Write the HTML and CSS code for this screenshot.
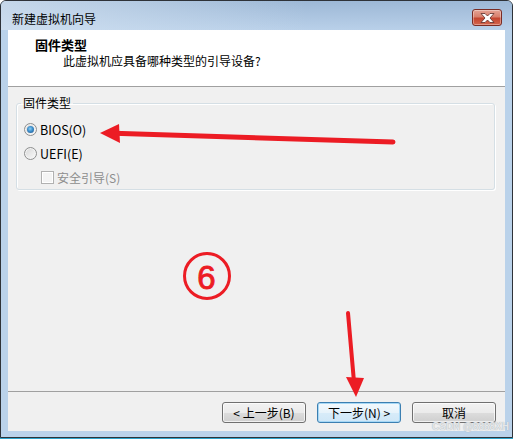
FILE: index.html
```html
<!DOCTYPE html>
<html lang="zh-CN">
<head>
    <meta charset="UTF-8">
    <meta name="viewport" content="width=device-width, initial-scale=1.0">
    <title>新建虚拟机向导</title>
    <link rel="stylesheet" href="styles.css">
</head>
<body>
    <div class="window">
        <div class="title-bar">
            <span class="title">新建虚拟机向导</span>
            <div class="close-btn">
                <svg width="15" height="10" viewBox="0 0 15 10">
                    <path d="M1 0.5h4L7.5 3l2.5-2.5h4L10 5l4 4.5h-4L7.5 7 5 9.5H1L5 5z" fill="#fff" stroke="#5a2d28" stroke-width="0.8" stroke-linejoin="round"/>
                </svg>
            </div>
        </div>

        <div class="client">
            <div class="header">
                <div class="header-title">固件类型</div>
                <div class="header-sub">此虚拟机应具备哪种类型的引导设备?</div>
            </div>

            <div class="content">
                <fieldset class="group">
                    <legend>固件类型</legend>
                    <div class="option"><span class="radio checked"></span>BIOS(O)</div>
                    <div class="option"><span class="radio"></span>UEFI(E)</div>
                    <div class="option sub disabled"><span class="checkbox"></span>安全引导(S)</div>
                </fieldset>
            </div>

            <div class="footer">
                <div class="btn">&lt; 上一步(B)</div>
                <div class="btn default">下一步(N) &gt;</div>
                <div class="btn">取消</div>
            </div>
        </div>
    </div>

    <!-- red annotations drawn on top of the screenshot -->
    <svg class="marks" width="513" height="439" viewBox="0 0 513 439">
        <circle cx="207" cy="276" r="22.5" fill="none" stroke="#ec1c24" stroke-width="3"/>
        <text x="206.5" y="289" text-anchor="middle" font-size="33" font-family="Liberation Sans, sans-serif" fill="#ec1c24" stroke="#ec1c24" stroke-width="0.9">6</text>

        <line x1="393" y1="142" x2="114" y2="133.3" stroke="#ec1c24" stroke-width="5" stroke-linecap="round"/>
        <polygon points="100,133 119,124 120,143" fill="#ec1c24"/>

        <line x1="348" y1="313" x2="354" y2="382" stroke="#ec1c24" stroke-width="4" stroke-linecap="round"/>
        <polygon points="346,377 364,378 356,397" fill="#ec1c24"/>
    </svg>

    <div class="watermark">CSDN @8888XH</div>
</body>
</html>
```

FILE: styles.css
```css
* {
    margin: 0;
    padding: 0;
    box-sizing: border-box;
}

body {
    width: 513px;
    height: 439px;
    position: relative;
    background: #fff;
    font-family: "Noto Sans CJK SC", "Microsoft YaHei", sans-serif;
    font-size: 12px;
    color: #000;
    overflow: hidden;
}

.window {
    width: 513px;
    height: 438px;
    display: flex;
    flex-direction: column;
    padding: 0 7px 6px;
    border: 1px solid #2e3238;
    border-radius: 6px 6px 0 0;
    background: #bad2ea;
    box-shadow: 0 1px 0 #2ea4cc;
}

.title-bar {
    height: 29px;
    margin: 0 -7px;
    display: flex;
    align-items: flex-start;
    justify-content: space-between;
    padding: 8px 10px 0 11px;
    border-radius: 5px 5px 0 0;
    background: linear-gradient(90deg, rgba(214, 228, 242, 0.7), rgba(214, 228, 242, 0) 60%),
                linear-gradient(180deg, #9db8d6, #b9d0e9);
}

.title {
    margin-top: 2px;
    line-height: 16px;
}

.close-btn {
    width: 30px;
    height: 17px;
    display: flex;
    align-items: center;
    justify-content: center;
    border: 1px solid #7a2c24;
    border-radius: 3px;
    background: linear-gradient(180deg, #e5a394 0%, #d8806d 45%, #c4452f 55%, #d3654d 100%);
    box-shadow: inset 0 0 0 1px rgba(255, 255, 255, 0.35);
}

.client {
    flex: 1;
    display: flex;
    flex-direction: column;
    background: #f0f0f0;
}

.header {
    height: 57px;
    padding: 7px 0 0 27px;
    background: #fff;
    border-bottom: 1px solid #a0a0a0;
}

.header-title {
    font-size: 13px;
    font-weight: bold;
    line-height: 16px;
}

.header-sub {
    margin-left: 28px;
    line-height: 16px;
}

.content {
    flex: 1;
}

.group {
    margin: 8px 10px 0 8px;
    padding: 6px 0 0;
    border: 1px solid #d5dfe5;
    border-radius: 3px;
    box-shadow: inset 1px 1px 0 #fff, 1px 1px 0 #fff;
    min-inline-size: 0;
}

.group legend {
    margin-left: 4px;
    padding: 0 2px;
    line-height: 16px;
}

.option {
    height: 24px;
    display: flex;
    align-items: center;
    padding-left: 7px;
    font-size: 12.5px;
}

.option.sub {
    padding-left: 24px;
    font-size: 12px;
}

.option.disabled {
    color: #8d8d8d;
}

.radio {
    width: 13px;
    height: 13px;
    margin-right: 3px;
    position: relative;
    border: 1px solid #8e8f8f;
    border-radius: 50%;
    background: linear-gradient(135deg, #d6d6d6, #fbfbfb);
    box-shadow: inset 0 0 0 1px #f4f4f4;
}

.radio.checked::after {
    content: "";
    position: absolute;
    top: 2px;
    left: 2px;
    width: 7px;
    height: 7px;
    border-radius: 50%;
    background: radial-gradient(circle at 45% 40%, #8ed0f4 0%, #3c8ecb 45%, #1e4f86 100%);
}

.checkbox {
    width: 13px;
    height: 13px;
    margin-right: 3px;
    border: 1px solid #b1b1b1;
    background: #f4f4f4;
    box-shadow: inset 0 0 0 1px #fff;
}

.footer {
    display: flex;
    justify-content: flex-end;
    gap: 11px;
    padding: 10px 9px 8px;
    border-top: 1px solid #a0a0a0;
}

.btn {
    width: 84px;
    height: 21px;
    display: flex;
    align-items: center;
    justify-content: center;
    line-height: 16px;
    border: 1px solid #707070;
    border-radius: 3px;
    background: linear-gradient(180deg, #f2f2f2 0%, #ebebeb 50%, #dddddd 50%, #cfcfcf 100%);
    box-shadow: inset 0 0 0 1px rgba(255, 255, 255, 0.7);
}

.btn.default {
    border-color: #3c7fb1;
    background: linear-gradient(180deg, #f3f9fd 0%, #e7f3fb 50%, #d8ecf9 50%, #cfe7f7 100%);
    box-shadow: inset 0 0 0 1px #a6d8f6;
}

.marks {
    position: absolute;
    top: 0;
    left: 0;
    pointer-events: none;
}

.watermark {
    position: absolute;
    right: 4px;
    bottom: 7px;
    font-family: "Liberation Sans", sans-serif;
    font-size: 10px;
    font-weight: bold;
    line-height: 11px;
    color: #e4e7ea;
    text-shadow: 0 0 1px #9aa2aa;
}
```
